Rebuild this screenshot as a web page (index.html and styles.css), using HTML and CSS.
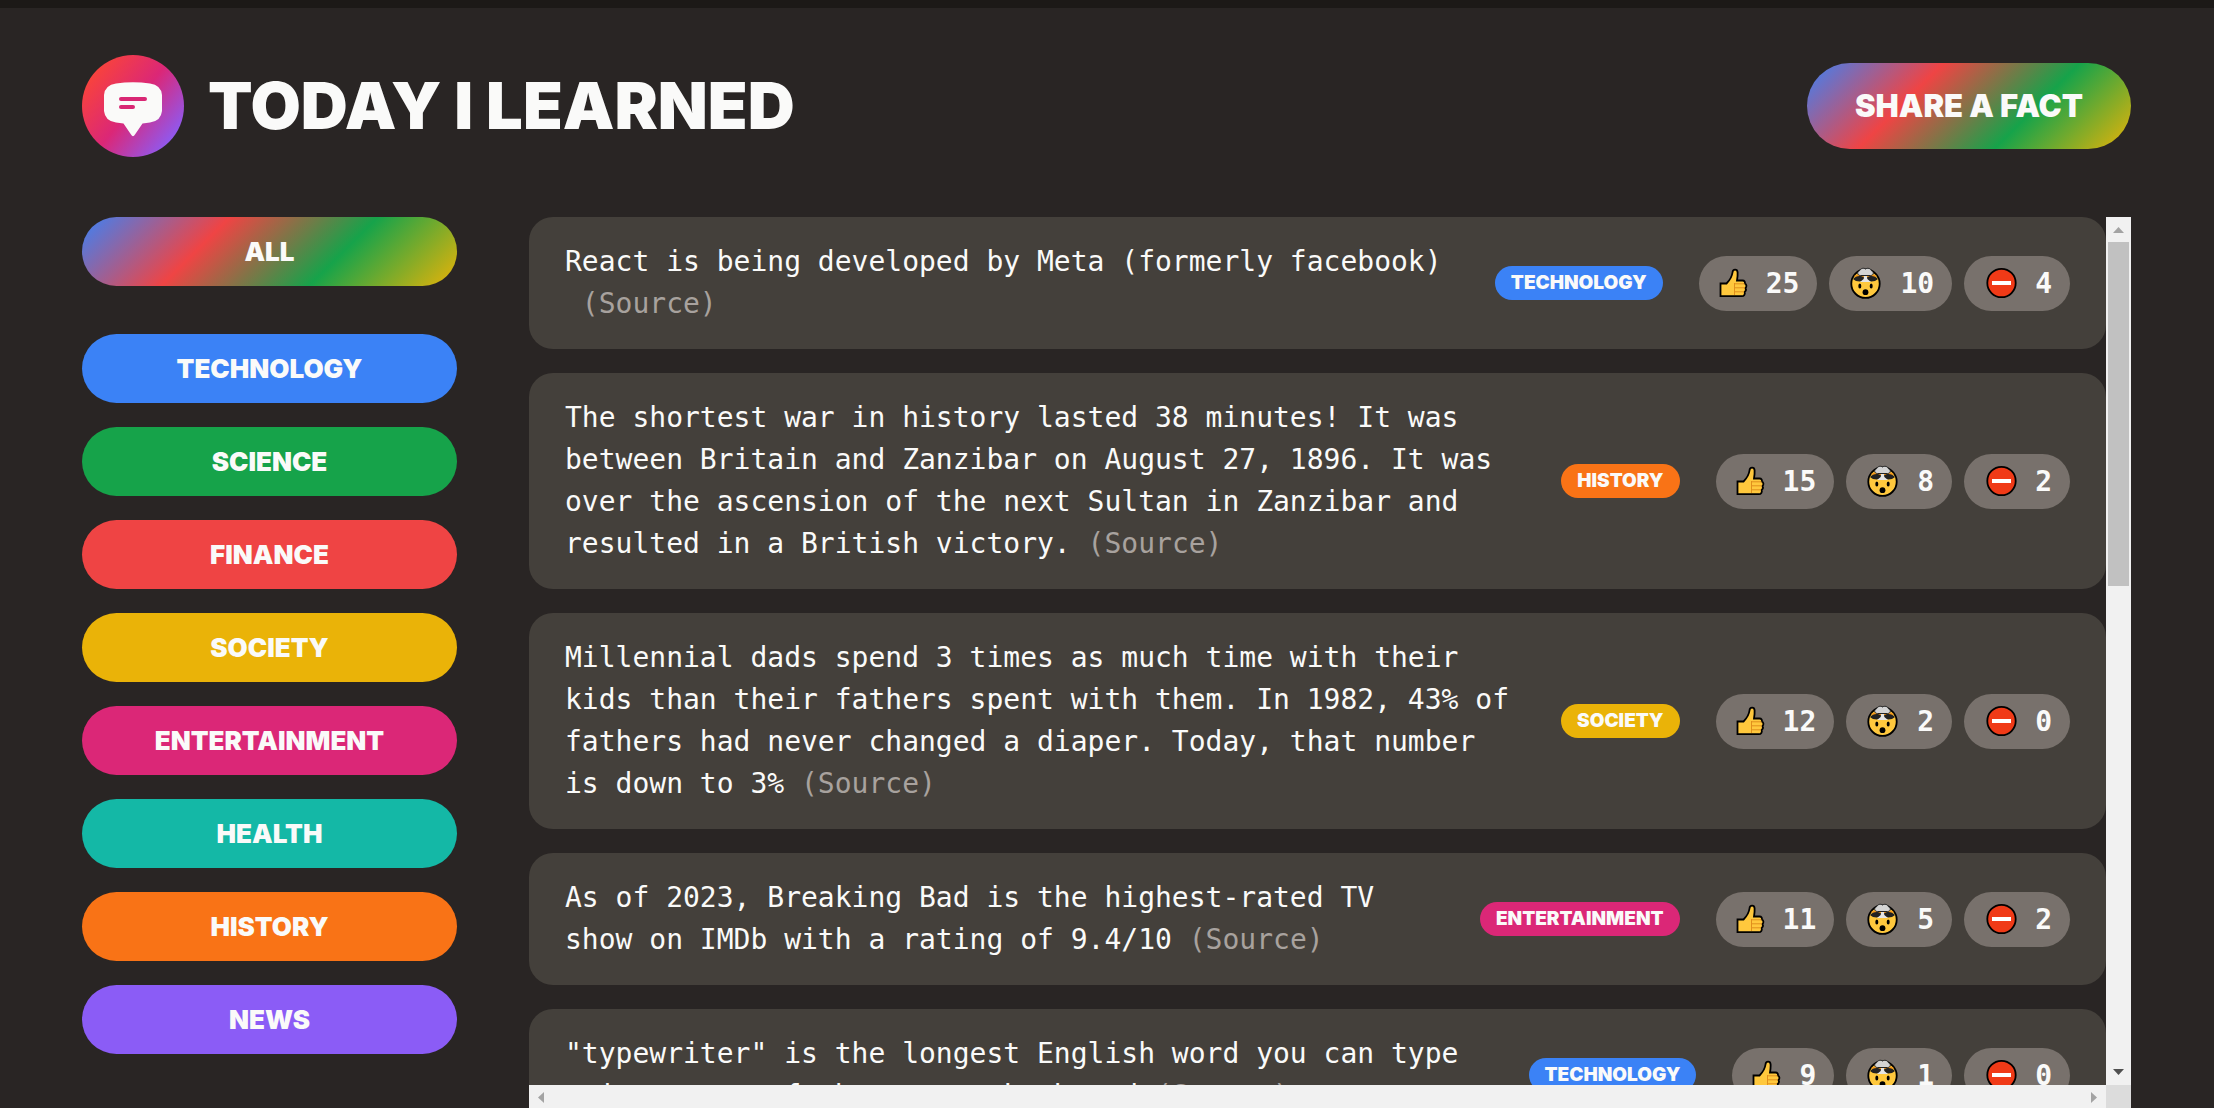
FILE: index.html
```html
<!DOCTYPE html>
<html lang="en">
<head>
<meta charset="utf-8">
<meta name="viewport" content="width=device-width, initial-scale=1">
<title>Today I Learned</title>
<link rel="stylesheet" href="styles.css">
</head>
<body>
<svg class="sprite" aria-hidden="true">
  <symbol id="thumb" viewBox="0 0 33 32">
    <path d="M3.500 16.500H9.500C12.500 13.500 15 9.500 15.500 5.500C15.800 1.800 20.300 1.800 20.600 5.300C20.800 8.500 20.500 10.500 20 13.500H25.500C27.600 13.500 28.300 15 27.800 16.500C29.800 17.300 29.800 20 28.500 21C29.300 22.500 28.800 24.200 27.700 25C28.300 27.200 27 29.200 25 29.200H3.500Z" fill="#ffc83d" stroke="#000" stroke-width="1.800"/>
    <path d="M17.500 16V28M18 16.800H27.500M18 20.800H28M18 24.800H27" fill="none" stroke="#e08f1d" stroke-width="1"/>
  </symbol>
  <symbol id="mind" viewBox="0 0 37 32">
    <circle cx="18.500" cy="16.700" r="14.200" fill="#ffc83d" stroke="#000" stroke-width="1.800"/>
    <path d="M7.500 8.500C12 6.500 25 6.500 29.500 8.500L27 13H10Z" fill="#f59a1b"/>
    <path d="M6 12C9 8.500 14 8 17.500 10.500L16.500 14C12.500 15 8.500 14.500 6 12ZM31 12C28 8.500 23 8 19.500 10.500L20.500 14C24.500 15 28.500 14.500 31 12Z" fill="#222"/>
    <path d="M17.200 8H19.800L20.300 12L24 15H13L16.700 12Z" fill="#e5e5e5"/>
    <path d="M13.500 8.500C10.500 8.500 9.500 5 12.500 3.800C13.500 1.200 17 .600 18.500 2C20.500 .600 23.800 1.300 24.500 3.800C27.500 5 26.500 8.500 23.500 8.500Z" fill="#d4d4d4" stroke="#222" stroke-width="1"/>
    <ellipse cx="12.800" cy="19" rx="1.500" ry="2.600"/><ellipse cx="24.200" cy="19" rx="1.500" ry="2.600"/><circle cx="18.500" cy="25.200" r="2.900"/>
  </symbol>
  <symbol id="false" viewBox="0 0 37 32">
    <circle cx="19.500" cy="16" r="14.200" fill="#f03a17" stroke="#000" stroke-width="1.800"/>
    <path d="M10 14H29V18H10Z" fill="#fff"/>
  </symbol>
</svg>

<header class="header">
  <div class="logo">
    <svg class="logo-mark" viewBox="0 0 102 102" aria-hidden="true">
      <defs>
        <linearGradient id="mark" x1="0" y1="0.100" x2="1" y2="0.900">
          <stop offset="0.080" stop-color="#fa4439"/>
          <stop offset="0.500" stop-color="#db2777"/>
          <stop offset="0.920" stop-color="#8b5cf6"/>
        </linearGradient>
      </defs>
      <circle cx="51" cy="51" r="51" fill="url(#mark)"/>
      <path d="M34 28.500Q51 26 68 28.500Q79 30 80 40V56Q79 66 68 67.500L60.500 68.500L53 79.500Q51 83 49 79.500L41.500 68.500L34 67.500Q23 66 22 56V40Q23 30 34 28.500Z" fill="#fafaf9"/>
      <path d="M39 44H63M39 52H51" stroke="#d92774" stroke-width="4" stroke-linecap="round"/>
    </svg>
    <h1 class="title">TODAY I LEARNED</h1>
  </div>
  <button class="share rainbow" type="button">SHARE A FACT</button>
</header>

<main class="main">
  <aside>
    <ul class="categories">
      <li class="category-all"><button class="category rainbow" type="button">ALL</button></li>
      <li><button class="category technology" type="button">TECHNOLOGY</button></li>
      <li><button class="category science" type="button">SCIENCE</button></li>
      <li><button class="category finance" type="button">FINANCE</button></li>
      <li><button class="category society" type="button">SOCIETY</button></li>
      <li><button class="category entertainment" type="button">ENTERTAINMENT</button></li>
      <li><button class="category health" type="button">HEALTH</button></li>
      <li><button class="category history" type="button">HISTORY</button></li>
      <li><button class="category news" type="button">NEWS</button></li>
    </ul>
  </aside>

  <section class="scroller">
    <ul class="facts">
      <li class="fact">
        <p class="fact-text">React is being developed by Meta (formerly facebook) <a class="source" href="#">&nbsp;(Source)</a></p>
        <span class="tag technology">TECHNOLOGY</span>
        <div class="votes">
          <button class="vote" type="button"><svg class="icon icon-thumb"><use href="#thumb"/></svg>25</button>
          <button class="vote" type="button"><svg class="icon"><use href="#mind"/></svg>10</button>
          <button class="vote" type="button"><svg class="icon"><use href="#false"/></svg>4</button>
        </div>
      </li>
      <li class="fact">
        <p class="fact-text">The shortest war in history lasted 38 minutes! It was between Britain and Zanzibar on August 27, 1896. It was over the ascension of the next Sultan in Zanzibar and resulted in a British victory. <a class="source" href="#">(Source)</a></p>
        <span class="tag history">HISTORY</span>
        <div class="votes">
          <button class="vote" type="button"><svg class="icon icon-thumb"><use href="#thumb"/></svg>15</button>
          <button class="vote" type="button"><svg class="icon"><use href="#mind"/></svg>8</button>
          <button class="vote" type="button"><svg class="icon"><use href="#false"/></svg>2</button>
        </div>
      </li>
      <li class="fact">
        <p class="fact-text">Millennial dads spend 3 times as much time with their kids than their fathers spent with them. In 1982, 43% of fathers had never changed a diaper. Today, that number is down to 3% <a class="source" href="#">(Source)</a></p>
        <span class="tag society">SOCIETY</span>
        <div class="votes">
          <button class="vote" type="button"><svg class="icon icon-thumb"><use href="#thumb"/></svg>12</button>
          <button class="vote" type="button"><svg class="icon"><use href="#mind"/></svg>2</button>
          <button class="vote" type="button"><svg class="icon"><use href="#false"/></svg>0</button>
        </div>
      </li>
      <li class="fact">
        <p class="fact-text">As of 2023, Breaking Bad is the highest-rated TV show on IMDb with a rating of 9.4/10 <a class="source" href="#">(Source)</a></p>
        <span class="tag entertainment">ENTERTAINMENT</span>
        <div class="votes">
          <button class="vote" type="button"><svg class="icon icon-thumb"><use href="#thumb"/></svg>11</button>
          <button class="vote" type="button"><svg class="icon"><use href="#mind"/></svg>5</button>
          <button class="vote" type="button"><svg class="icon"><use href="#false"/></svg>2</button>
        </div>
      </li>
      <li class="fact">
        <p class="fact-text">"typewriter" is the longest English word you can type using a row of the qwerty keyboard <a class="source" href="#">(Source)</a></p>
        <span class="tag technology">TECHNOLOGY</span>
        <div class="votes">
          <button class="vote" type="button"><svg class="icon icon-thumb"><use href="#thumb"/></svg>9</button>
          <button class="vote" type="button"><svg class="icon"><use href="#mind"/></svg>1</button>
          <button class="vote" type="button"><svg class="icon"><use href="#false"/></svg>0</button>
        </div>
      </li>
    </ul>
    <div class="bar bar-vertical" aria-hidden="true">
      <svg class="arrow" viewBox="0 0 25 25"><path d="M7 16L12.500 10L18 16Z" fill="#a3a3a3"/></svg>
      <div class="bar-track"><div class="bar-thumb"></div></div>
      <svg class="arrow" viewBox="0 0 25 25"><path d="M7 9L12.500 15L18 9Z" fill="#505050"/></svg>
    </div>
    <div class="bar bar-horizontal" aria-hidden="true">
      <svg class="arrow" viewBox="0 0 25 25"><path d="M15 7L9 12.500L15 18Z" fill="#a3a3a3"/></svg>
      <svg class="arrow" viewBox="0 0 25 25"><path d="M10 7L16 12.500L10 18Z" fill="#a3a3a3"/></svg>
    </div>
    <div class="bar-corner"></div>
  </section>
</main>
</body>
</html>
```
FILE: styles.css
```css
* {
  box-sizing: border-box;
  margin: 0;
  padding: 0;
}

body {
  display: flex;
  flex-direction: column;
  height: 100vh;
  padding: 47px 83px 0 82px;
  overflow: hidden;
  border-top: 8px solid #1c1917;
  background: #292524;
  color: #fafaf9;
  font-family: "DejaVu Sans Mono", monospace;
  font-size: 28px;
  line-height: 42px;
}

ul {
  list-style: none;
}

button {
  border: none;
  color: inherit;
  cursor: pointer;
}

.sprite {
  position: absolute;
  width: 0;
  height: 0;
}

.header {
  display: flex;
  align-items: center;
  justify-content: space-between;
  margin-bottom: 60px;
}

.logo {
  display: flex;
  align-items: center;
  gap: 24px;
}

.logo-mark {
  width: 102px;
  height: 102px;
}

.title,
.share,
.category,
.tag {
  font-family: Inter, sans-serif;
  font-weight: 900;
}

.title {
  font-size: 65px;
  line-height: 72px;
}

.share {
  padding: 22px 48px;
  border-radius: 43px;
  font-size: 31px;
  line-height: 42px;
}

.rainbow {
  background: linear-gradient(135deg, #3b82f6, #ef4444, #16a34a, #eab308);
}

.main {
  display: grid;
  grid-template-columns: 375px 1fr;
  gap: 72px;
  flex: 1;
  min-height: 0;
}

.categories {
  display: flex;
  flex-direction: column;
  gap: 24px;
}

.category-all {
  margin-bottom: 24px;
}

.category {
  display: block;
  width: 100%;
  height: 69px;
  border-radius: 35px;
  font-size: 26px;
}

.technology { background: #3b82f6; }
.science { background: #16a34a; }
.finance { background: #ef4444; }
.society { background: #eab308; }
.entertainment { background: #db2777; }
.health { background: #14b8a6; }
.history { background: #f97316; }
.news { background: #8b5cf6; }

.scroller {
  display: grid;
  grid-template-columns: 1fr 25px;
  grid-template-rows: minmax(0, 1fr) 23px;
  min-height: 0;
}

.facts {
  display: flex;
  flex-direction: column;
  gap: 24px;
  overflow: hidden;
}

.fact {
  display: flex;
  flex: none;
  align-items: center;
  gap: 36px;
  padding: 24px 36px;
  border-radius: 24px;
  background: #44403b;
}

.fact-text {
  flex: 1;
}

.source {
  color: #a8a29e;
  text-decoration: none;
}

.tag {
  padding: 0 16px;
  border-radius: 17px;
  font-size: 19px;
  line-height: 34px;
}

.votes {
  display: flex;
  gap: 12px;
}

.vote {
  display: flex;
  align-items: center;
  gap: 16px;
  height: 55px;
  padding: 0 18px;
  border-radius: 28px;
  background: #78716c;
  font-family: inherit;
  font-size: 28px;
  font-weight: 700;
}

.icon {
  width: 37px;
  height: 32px;
}

.icon-thumb {
  width: 33px;
}

.bar {
  display: flex;
  justify-content: space-between;
  background: #f1f1f1;
}

.bar-vertical {
  flex-direction: column;
}

.bar-track {
  flex: 1;
  padding: 0 2px;
}

.bar-thumb {
  height: 42%;
  background: #c1c1c1;
}

.bar-corner {
  background: #dcdcdc;
}

.arrow {
  flex: none;
  width: 25px;
  height: 25px;
}
```
